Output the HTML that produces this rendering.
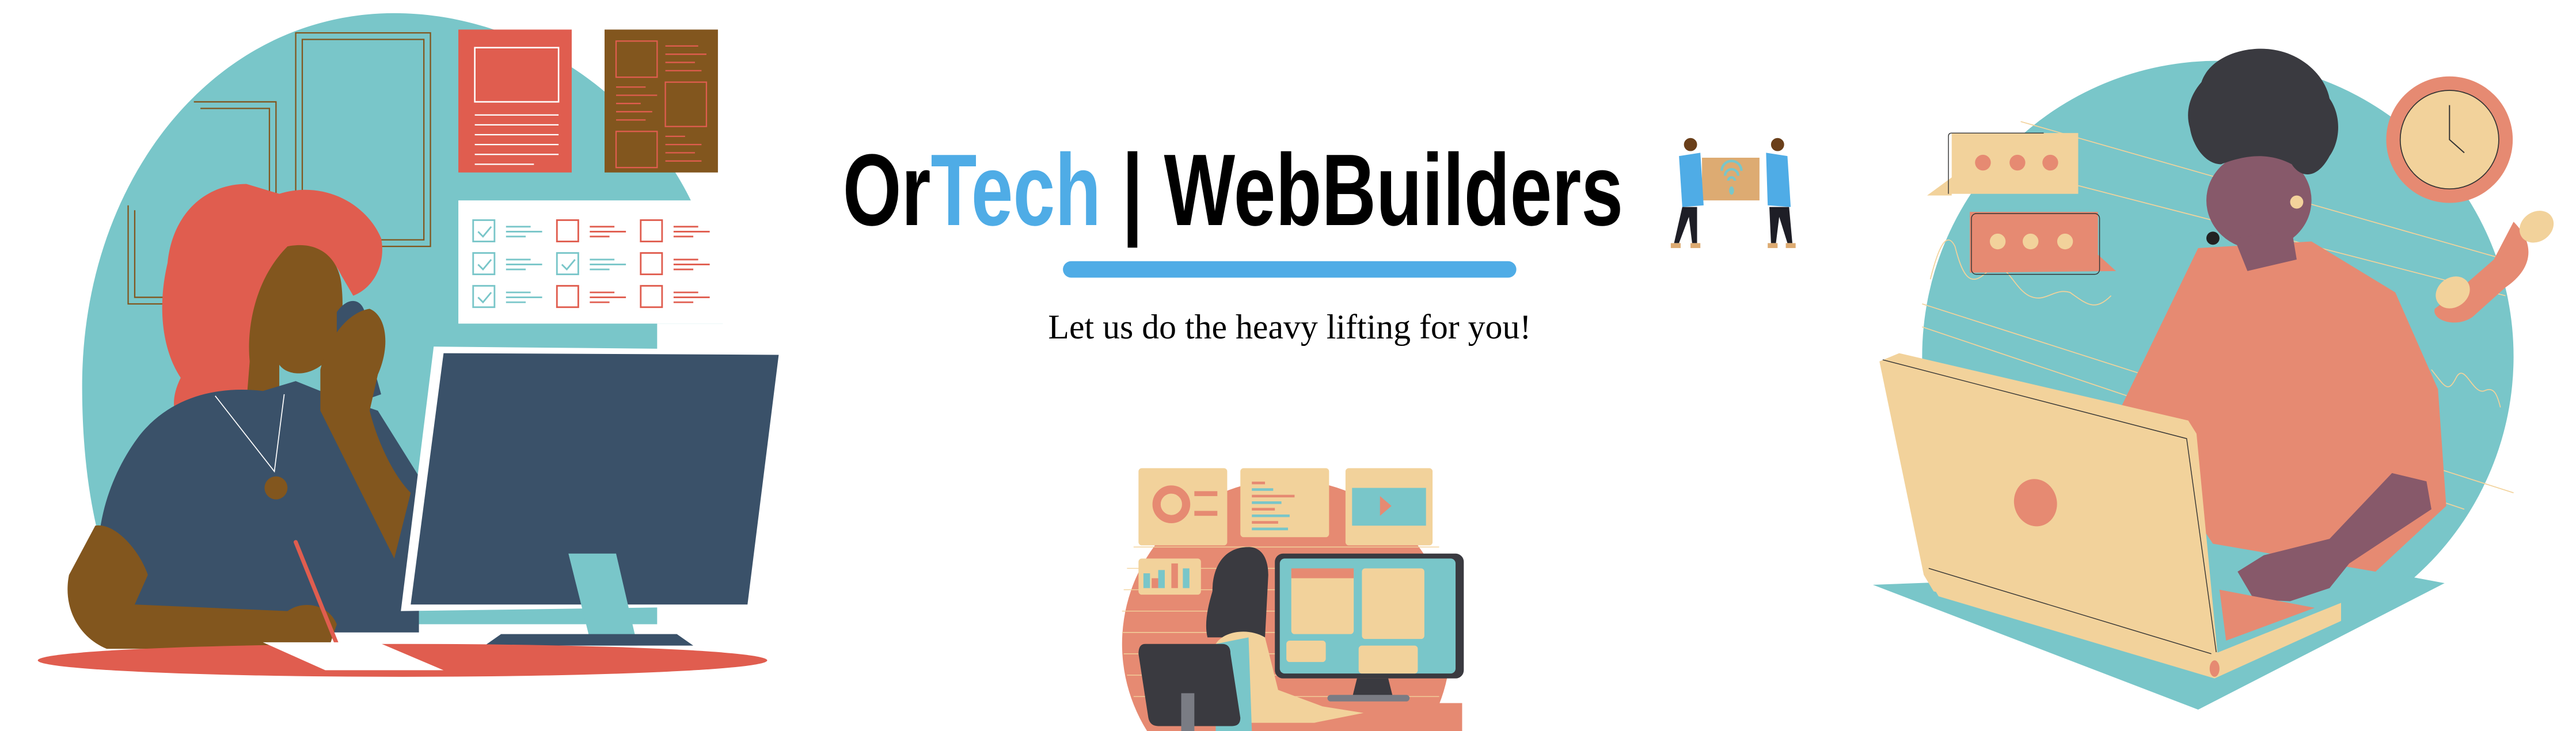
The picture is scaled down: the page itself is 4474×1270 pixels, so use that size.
<!DOCTYPE html>
<html><head><meta charset="utf-8"><style>
html,body{margin:0;padding:0;background:#fff;overflow:hidden;width:4474px;height:1270px;position:relative;}
svg{display:block;position:absolute;left:0;top:0;}
</style></head><body>
<svg width="4474" height="1270" viewBox="0 0 1568 445" preserveAspectRatio="none" xmlns="http://www.w3.org/2000/svg">
<rect width="1568" height="445" fill="#fff"/>

<!-- ================= LEFT ILLUSTRATION ================= -->
<path d="M240,8 C130,8 50,110 50,235 C50,300 62,345 80,380 L400,380 L400,197 L440,197 C435,90 340,8 240,8Z" fill="#79C6C9"/>
<g fill="none" stroke="#82561E" stroke-width="0.8">
<rect x="180" y="20" width="82" height="130"/><rect x="184" y="24" width="74" height="122"/>
<path d="M118,62 H168 V185 M122,66 H164 V181"/>
<path d="M78,125 V185 H110 M82,128 V181 H110"/>
</g>
<rect x="279" y="18" width="69" height="87" fill="#E05D4F"/>
<rect x="289" y="29" width="51" height="33" fill="none" stroke="#fff" stroke-width="0.9"/>
<g stroke="#fff" stroke-width="0.8"><line x1="289" y1="70" x2="340" y2="70"/><line x1="289" y1="76" x2="340" y2="76"/><line x1="289" y1="82" x2="340" y2="82"/><line x1="289" y1="88" x2="340" y2="88"/><line x1="289" y1="94" x2="340" y2="94"/><line x1="289" y1="100" x2="325" y2="100"/></g>
<rect x="368" y="18" width="69" height="87" fill="#82561E"/>
<g fill="none" stroke="#E05D4F" stroke-width="0.8">
<rect x="375" y="25" width="25" height="22"/><rect x="405" y="50" width="25" height="27"/><rect x="375" y="80" width="25" height="22"/>
<path d="M405,28h20M405,33h25M405,38h18M405,43h22M375,53h18M375,58h25M375,63h15M375,68h22M375,73h18M405,83h12M405,88h22M405,93h18M405,98h22"/>
</g>
<rect x="279" y="122" width="164" height="75" fill="#fff"/>
<g fill="none" stroke-width="1">
<g stroke="#79C6C9"><rect x="288" y="134" width="13" height="13"/><rect x="288" y="154" width="13" height="13"/><rect x="288" y="174" width="13" height="13"/><rect x="339" y="154" width="13" height="13"/>
<path d="M291,141l3,3l5,-6M291,161l3,3l5,-6M291,181l3,3l5,-6M342,161l3,3l5,-6"/>
<path d="M308,138h15M308,141h22M308,144h12M308,158h15M308,161h22M308,164h12M308,178h15M308,181h22M308,184h12M359,158h15M359,161h22M359,164h12"/></g>
<g stroke="#E05D4F"><rect x="339" y="134" width="13" height="13"/><rect x="339" y="174" width="13" height="13"/><rect x="390" y="134" width="13" height="13"/><rect x="390" y="154" width="13" height="13"/><rect x="390" y="174" width="13" height="13"/>
<path d="M359,138h15M359,141h22M359,144h12M359,178h15M359,181h22M359,184h12M410,138h15M410,141h22M410,144h12M410,158h15M410,161h22M410,164h12M410,178h15M410,181h22M410,184h12"/></g>
</g>
<path d="M150,112 C125,112 105,130 102,160 C95,190 100,215 110,230 C100,250 110,262 120,268 L175,268 L170,235 C160,200 160,170 175,152 C190,148 200,152 208,168 L215,180 C228,175 235,160 232,145 C222,122 195,110 170,118 Z" fill="#E05D4F"/>
<path d="M175,150 C195,146 207,158 208,175 C210,195 206,212 196,222 C186,230 174,228 170,222 L170,245 L150,245 L152,220 C150,200 155,170 175,150 Z" fill="#82561E"/>
<path d="M205,190 C212,180 220,182 222,190 L225,215 L232,240 L215,246 L205,230Z" fill="#3A5169"/>
<path d="M85,265 C105,240 135,235 160,238 L180,232 L200,240 L230,250 L255,290 L255,385 L80,385 L60,330 C62,305 72,282 85,265Z" fill="#3A5169"/>
<path d="M131,241 L167,287 L173,240" fill="none" stroke="#fff" stroke-width="0.6"/>
<circle cx="168" cy="297" r="7" fill="#82561E"/>
<path d="M195,225 C200,205 212,190 225,188 C235,192 238,210 230,228 L225,250 C230,270 240,290 250,300 L240,340 C225,310 210,280 195,250Z" fill="#82561E"/>
<path d="M58,320 C70,318 85,335 90,350 L82,368 L175,372 C185,365 200,368 205,380 L200,395 L65,395 C48,388 38,370 42,350Z" fill="#82561E"/>
<line x1="180" y1="330" x2="205" y2="392" stroke="#E05D4F" stroke-width="2.5" stroke-linecap="round"/>
<path d="M264,211 L476,213 L458,369 L244,372 Z" fill="#fff"/>
<path d="M270,215 L474,216 L455,368 L250,368 Z" fill="#3A5169"/>
<path d="M346,337 L375,337 L388,393 L360,393 Z" fill="#79C6C9"/>
<path d="M305,386 L412,386 L422,393 L295,393Z" fill="#3A5169"/>
<ellipse cx="245" cy="402" rx="222" ry="10" fill="#E05D4F"/>
<path d="M160,391 L230,391 L270,408 L198,408Z" fill="#fff"/>

<!-- ================= TITLE ================= -->
<text x="513" y="137" font-family="'Liberation Sans Narrow','Liberation Sans',sans-serif" font-weight="bold" font-size="62" textLength="475" lengthAdjust="spacingAndGlyphs" fill="#000"><tspan>Or</tspan><tspan fill="#4FACE6">Tech</tspan><tspan> | WebBuilders</tspan></text>
<rect x="647" y="159" width="276" height="10" rx="5" fill="#4FACE6"/>
<text x="638" y="206" font-family="'Liberation Serif',serif" font-size="21" textLength="294" lengthAdjust="spacingAndGlyphs" fill="#000">Let us do the heavy lifting for you!</text>

<g>
<rect x="1036" y="96" width="35" height="26" fill="#DDAB72"/>
<path d="M1048,104a6,6 0 0 1 12,0M1050,107a4,4 0 0 1 8,0M1052,110a2,2 0 0 1 4,0" fill="none" stroke="#79C6C9" stroke-width="1.5"/>
<ellipse cx="1054" cy="116" rx="1.5" ry="2.5" fill="#79C6C9"/>
<circle cx="1029" cy="88" r="4" fill="#6A3F1A"/><circle cx="1082" cy="88" r="4" fill="#6A3F1A"/>
<path d="M1022,95 L1035,93 L1037,125 L1024,126 Z" fill="#4FACE6"/>
<path d="M1075,93 L1088,95 L1090,126 L1076,125 Z" fill="#4FACE6"/>
<path d="M1024,126 L1033,126 L1033,148 L1030,148 L1028,132 L1022,148 L1019,148 Z" fill="#1E1E26"/>
<path d="M1077,126 L1089,126 L1091,148 L1088,148 L1083,132 L1081,148 L1078,148 Z" fill="#1E1E26"/>
<rect x="1017" y="148" width="6" height="3" fill="#DDAB72"/><rect x="1029" y="148" width="6" height="3" fill="#DDAB72"/>
<rect x="1076" y="148" width="6" height="3" fill="#DDAB72"/><rect x="1087" y="148" width="6" height="3" fill="#DDAB72"/>
</g>

<!-- ================= CENTER BOTTOM ILLUSTRATION ================= -->
<path d="M698.2,445 A100,100 0 1 1 867.8,445 Z" fill="#E68A72"/>
<g stroke="#F2D29B" stroke-width="0.5"><line x1="690" y1="333" x2="876" y2="333"/><line x1="686" y1="346" x2="880" y2="346"/><line x1="684" y1="359" x2="882" y2="359"/><line x1="683" y1="372" x2="883" y2="372"/><line x1="683" y1="385" x2="883" y2="385"/><line x1="684" y1="398" x2="882" y2="398"/><line x1="686" y1="411" x2="880" y2="411"/><line x1="690" y1="424" x2="876" y2="424"/></g>
<rect x="693" y="285" width="54" height="47" rx="2" fill="#F2D29B"/>
<circle cx="713" cy="307" r="9" fill="none" stroke="#E68A72" stroke-width="5"/>
<rect x="727" y="299" width="14" height="3" fill="#E68A72"/><rect x="727" y="311" width="14" height="3" fill="#E68A72"/>
<rect x="755" y="285" width="54" height="42" rx="2" fill="#F2D29B"/>
<g stroke-width="1.6"><line x1="762" y1="294" x2="770" y2="294" stroke="#E68A72"/><line x1="762" y1="298" x2="775" y2="298" stroke="#79C6C9"/><line x1="762" y1="302" x2="788" y2="302" stroke="#E68A72"/><line x1="762" y1="306" x2="780" y2="306" stroke="#79C6C9"/><line x1="762" y1="310" x2="776" y2="310" stroke="#E68A72"/><line x1="762" y1="314" x2="785" y2="314" stroke="#79C6C9"/><line x1="762" y1="318" x2="778" y2="318" stroke="#E68A72"/><line x1="762" y1="322" x2="784" y2="322" stroke="#79C6C9"/></g>
<rect x="819" y="285" width="53" height="47" rx="2" fill="#F2D29B"/>
<rect x="823" y="297" width="45" height="23" fill="#79C6C9"/>
<path d="M840,302 L847,308 L840,314Z" fill="#E68A72"/>
<rect x="693" y="340" width="38" height="22" rx="2" fill="#F2D29B"/>
<g fill="#79C6C9"><rect x="696" y="349" width="4" height="9"/><rect x="705" y="347" width="4" height="11"/><rect x="720" y="346" width="4" height="12"/></g>
<g fill="#E68A72"><rect x="701" y="352" width="4" height="6"/><rect x="713" y="343" width="4" height="15"/></g>
<rect x="776" y="337" width="115" height="76" rx="5" fill="#3A3A40"/>
<rect x="779" y="340" width="107" height="70" rx="3" fill="#79C6C9"/>
<rect x="786" y="346" width="38" height="40" rx="2" fill="#F2D29B"/>
<rect x="786" y="346" width="38" height="6" fill="#E68A72"/>
<rect x="829" y="346" width="38" height="43" rx="2" fill="#F2D29B"/>
<rect x="827" y="393" width="36" height="17" rx="2" fill="#F2D29B"/>
<rect x="783" y="390" width="24" height="13" rx="2" fill="#F2D29B"/>
<path d="M826,413 L845,413 L848,425 L823,425Z" fill="#3A3A40"/>
<rect x="808" y="423" width="50" height="4" rx="2" fill="#7A7C84"/>
<rect x="700" y="428" width="190" height="17" fill="#E68A72"/>
<path d="M760,333 C745,333 738,345 738,360 C735,370 733,380 735,388 L770,388 L772,350 C772,340 768,333 760,333Z" fill="#3A3A40"/>
<path d="M740,392 C745,384 760,382 770,388 L778,420 L805,430 L830,434 L800,440 L760,440 L740,420Z" fill="#F2D29B"/>
<path d="M740,392 L760,388 L762,445 L740,445Z" fill="#79C6C9"/>
<path d="M697,392 L744,392 Q749,392 749,398 L755,437 Q755,442 750,442 L705,442 Q700,442 699,437 L693,398 Q693,392 697,392Z" fill="#3A3A40"/>
<rect x="719" y="422" width="8" height="23" fill="#7A7C84"/>

<!-- ================= RIGHT ILLUSTRATION ================= -->
<circle cx="1350" cy="217" r="180" fill="#79C6C9"/>
<g stroke="#F2D29B" stroke-width="0.6" fill="none">
<line x1="1230" y1="74" x2="1525" y2="158"/><line x1="1265" y1="113" x2="1525" y2="180"/>
<line x1="1170" y1="185" x2="1530" y2="300"/><line x1="1170" y1="199" x2="1500" y2="310"/>
<path d="M1175,170 C1180,150 1185,140 1190,150 C1195,170 1200,175 1210,165 C1220,155 1225,175 1235,180 C1245,185 1250,175 1260,178 C1270,185 1275,190 1285,180"/>
<path d="M1480,225 C1488,235 1490,240 1495,230 C1500,220 1505,240 1512,238 C1518,235 1520,240 1522,248"/>
</g>
<path d="M1140,356 L1338,432 L1488,355 L1435,345 Z" fill="#79C6C9"/>
<path d="M1188,81 L1265,81 L1265,118 L1188,118 L1188,108 L1173,119 L1188,119Z" fill="#F2D29B"/>
<path d="M1186,118 L1186,83 Q1186,81 1188,81 L1244,81" fill="none" stroke="#333" stroke-width="0.5"/>
<g fill="#E68A72"><circle cx="1207" cy="99" r="4.8"/><circle cx="1228" cy="99" r="4.8"/><circle cx="1248" cy="99" r="4.8"/></g>
<path d="M1199,129 L1277,129 L1277,155 L1288,165 L1199,166Z" fill="#E68A72"/>
<rect x="1200" y="130" width="78" height="37" rx="3" fill="none" stroke="#333" stroke-width="0.5"/>
<g fill="#F2D29B"><circle cx="1216" cy="147" r="4.8"/><circle cx="1236" cy="147" r="4.8"/><circle cx="1257" cy="147" r="4.8"/></g>
<circle cx="1491" cy="85" r="38.5" fill="#E68A72"/>
<circle cx="1491" cy="85" r="30" fill="#F2D29B" stroke="#333" stroke-width="0.6"/>
<path d="M1491,64 V85 L1500,93" fill="none" stroke="#333" stroke-width="0.7"/>
<path d="M1530,135 C1545,150 1540,165 1525,175 L1505,193 C1495,200 1480,195 1482,188 L1495,178 L1518,158 Z" fill="#E68A72"/>
<ellipse cx="1544" cy="138" rx="11" ry="9" fill="#F2D29B" transform="rotate(-35 1544 138)"/>
<ellipse cx="1493" cy="178" rx="11" ry="9" fill="#F2D29B" transform="rotate(-35 1493 178)"/>
<path d="M1291,248 L1338,151 L1407,147 L1458,178 L1484,237 L1489,308 L1446,348 L1347,331 Z" fill="#E68A72"/>
<ellipse cx="1375" cy="122" rx="32" ry="30" fill="#87596A"/>
<path d="M1360,145 L1395,140 L1398,158 L1368,165Z" fill="#87596A"/>
<path d="M1340,50 C1345,35 1365,28 1382,30 C1400,32 1415,45 1418,60 C1425,70 1425,85 1418,95 C1410,110 1400,108 1395,100 C1380,92 1365,95 1352,100 C1343,100 1335,90 1333,78 C1330,68 1333,58 1340,50Z" fill="#3A3A40"/>
<circle cx="1347" cy="145" r="4" fill="#222"/>
<circle cx="1398" cy="123" r="4" fill="#F2D29B"/>
<path d="M1418,328 L1456,288 L1477,293 L1480,310 L1430,343 L1418,358 L1394,366 L1372,365 L1362,348 L1378,338Z" fill="#87596A"/>
<path d="M1348,398 L1425,367 L1425,378 L1348,413 L1180,363 L1176,356 Z" fill="#F2D29B"/>
<path d="M1351,359 L1409,370 L1355,390Z" fill="#E68A72"/>
<path d="M1144,220 L1156,215 L1332,256 L1337,264 L1350,400 L1177,360 L1171,350 Z" fill="#F2D29B"/>
<path d="M1146,219 L1331,267 L1349,397 M1174,346 L1346,398" fill="none" stroke="#333" stroke-width="0.5"/>
<ellipse cx="1239" cy="306" rx="13" ry="14.5" fill="#E68A72" transform="rotate(-15 1239 306)"/>
<ellipse cx="1348" cy="407" rx="3" ry="5" fill="#E68A72"/>
</svg>
</body></html>
